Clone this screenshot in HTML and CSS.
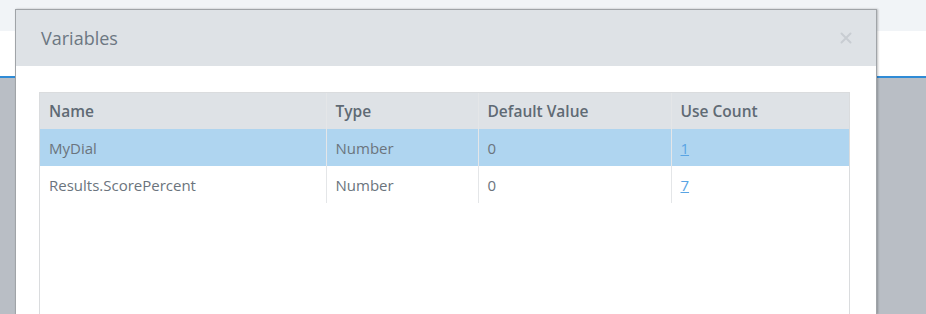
FILE: index.html
```html
<!DOCTYPE html>
<html>
<head>
<meta charset="utf-8">
<link rel="stylesheet" href="styles.css">
</head>
<body>
<div class="page">
  <div class="topbar"></div>
  <div class="whiteband"></div>
  <div class="blueline"></div>
  <div class="backdrop"></div>
</div>
<div class="dialog">
  <div class="dialog-header">
    <span class="title">Variables</span>
    <svg class="close" width="12" height="12" viewBox="0 0 12 12"><path d="M1.5 1.5 L10.5 10.5 M10.5 1.5 L1.5 10.5" stroke="#c8cdd2" stroke-width="2" stroke-linecap="round"/></svg>
  </div>
  <div class="dialog-body">
    <div class="grid">
      <table class="vars">
        <colgroup>
          <col class="c1"><col class="c2"><col class="c3"><col class="c4">
        </colgroup>
        <thead>
          <tr><th>Name</th><th>Type</th><th>Default Value</th><th>Use Count</th></tr>
        </thead>
        <tbody>
          <tr class="selected"><td>MyDial</td><td>Number</td><td>0</td><td><a href="#">1</a></td></tr>
          <tr><td>Results.ScorePercent</td><td>Number</td><td>0</td><td><a href="#">7</a></td></tr>
        </tbody>
      </table>
    </div>
  </div>
</div>
</body>
</html>
```

FILE: styles.css
```css
html, body {
  margin: 0;
  padding: 0;
  width: 926px;
  height: 314px;
  overflow: hidden;
  font-family: "Open Sans", "Liberation Sans", sans-serif;
}
.page {
  display: flex;
  flex-direction: column;
  height: 314px;
}
.topbar {
  height: 31px;
  background: #f1f4f7;
}
.whiteband {
  height: 45px;
  background: #ffffff;
}
.blueline {
  height: 2px;
  background: #2f8bd6;
}
.backdrop {
  flex: 1;
  background: #b9bec5;
}
.dialog {
  position: absolute;
  left: 15px;
  top: 9px;
  width: 860px;
  height: 304px;
  background: #ffffff;
  border: 1px solid #a0a4a8;
  border-bottom: none;
  box-shadow: 1px 0 2px rgba(0,0,0,0.25);
}
.dialog-header {
  height: 56px;
  background: #dee2e6;
  display: flex;
  align-items: center;
  justify-content: space-between;
  padding: 0 25px 0 25px;
}
.title {
  font-size: 18px;
  color: #6c7782;
  margin-top: -1px;
}
.close {
  display: block;
  margin-right: -1px;
  margin-top: -1px;
}
.dialog-body {
  padding: 26px 26px 0 23px;
}
.grid {
  border: 1px solid #dadcde;
  border-bottom: none;
  height: 221px;
}
.vars {
  border-collapse: collapse;
  width: 809px;
  table-layout: fixed;
  font-size: 15px;
}
.c1 { width: 286px; }
.c2 { width: 152px; }
.c3 { width: 193px; }
.c4 { width: 178px; }
.vars th, .vars td {
  height: 37px;
  padding: 0 9px;
  text-align: left;
  border-left: 1px solid #e4e6e8;
  box-sizing: border-box;
  white-space: nowrap;
}
.vars th:first-child, .vars td:first-child {
  border-left: none;
}
.vars th {
  height: 36px;
  background: #dee2e6;
  color: #5f6a74;
  font-weight: 600;
  font-size: 15.5px;
}
.vars td {
  color: #6b747d;
  padding-top: 1px;
}
.vars tr.selected td {
  background: #afd5f0;
}
.vars a {
  color: #59a4e4;
  text-decoration: underline;
}
```
